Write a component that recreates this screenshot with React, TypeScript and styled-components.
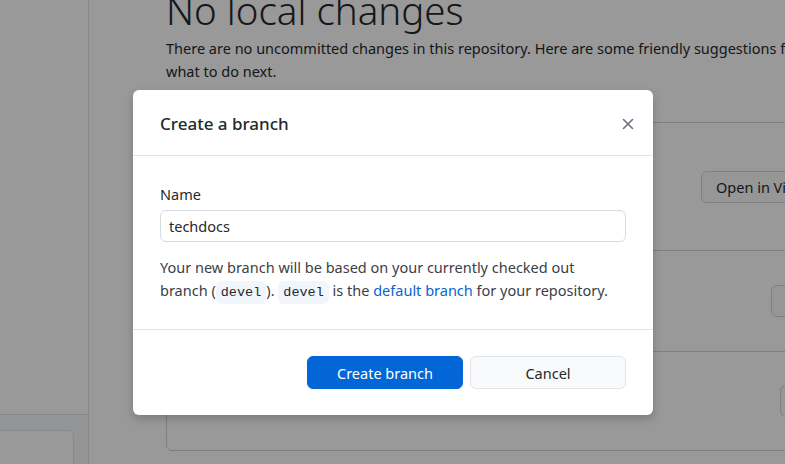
import React from "react";
import styled, { createGlobalStyle } from "styled-components";

const GlobalStyle = createGlobalStyle`
    html, body {
        margin: 0;
        padding: 0;
        width: 785px;
        height: 464px;
        overflow: hidden;
        background: #ffffff;
        font-family: "Noto Sans", "Open Sans", sans-serif;
        color: #24292e;
    }
`;

const Screen = styled.div`
    position: relative;
    display: flex;
    width: 785px;
    height: 464px;
    overflow: hidden;
    background: #ffffff;
`;

const Sidebar = styled.div`
    width: 88px;
    flex-shrink: 0;
    border-right: 1px solid #e1e4e8;
    display: flex;
    flex-direction: column;
    justify-content: flex-end;
`;

const SidebarFooter = styled.div`
    height: 34px;
    border-top: 1px solid #e1e4e8;
    background: #f6f8fa;
    padding: 15px 14px 0 0;
`;

const SidebarBox = styled.div`
    height: 100%;
    background: #ffffff;
    border: 1px solid #e1e4e8;
    border-left: none;
    border-radius: 0 6px 0 0;
`;

const Main = styled.div`
    flex: 1;
    padding: 0 0 0 77px;
    min-width: 0;
`;

const Heading = styled.h1`
    margin: -17px 0 0;
    font-size: 38.5px;
    font-weight: 300;
    line-height: 54px;
    white-space: nowrap;
`;

const Intro = styled.p`
    margin: 0;
    font-size: 14.5px;
    line-height: 23px;
    width: 640px;
`;

const Card = styled.div`
    margin-top: 39px;
    width: 768px;
    border: 1px solid #d1d5da;
    border-radius: 6px;
`;

const CardRow = styled.div<{ $height: number }>`
    height: ${({ $height }) => $height}px;
    display: flex;
    align-items: center;
    justify-content: space-between;
    padding: 0 20px;
    border-top: 1px solid #d1d5da;
    &:first-child {
        border-top: none;
    }
`;

const RowText = styled.div`
    font-size: 14px;
    line-height: 20px;
`;

const RowButton = styled.div`
    height: 30px;
    padding: 0 14px;
    display: flex;
    align-items: center;
    border: 1px solid #d1d5da;
    border-radius: 6px;
    background: #fafbfc;
    font-size: 14.5px;
    white-space: nowrap;
`;

const Key = styled.span`
    display: inline-block;
    margin-left: 3px;
    padding: 0 8px;
    border: 1px solid #d1d5da;
    border-radius: 6px;
    font-size: 12px;
    line-height: 20px;
`;

const Backdrop = styled.div`
    position: absolute;
    inset: 0;
    background: rgba(0, 0, 0, 0.4);
`;

const Dialog = styled.div`
    position: absolute;
    left: 133px;
    top: 90px;
    width: 520px;
    background: #ffffff;
    border-radius: 6px;
    box-shadow: 0 4px 10px rgba(0, 0, 0, 0.2);
`;

const DialogHeader = styled.div`
    height: 63px;
    display: flex;
    align-items: center;
    justify-content: space-between;
    padding: 2px 17px 0 27px;
    border-bottom: 1px solid #e1e4e8;
`;

const DialogTitle = styled.h2`
    margin: 0;
    font-size: 17px;
    font-weight: 500;
    color: #24292e;
`;

const CloseButton = styled.button`
    border: none;
    background: none;
    padding: 0;
    width: 16px;
    height: 16px;
    display: flex;
    color: #6a737d;
    cursor: pointer;
`;

const DialogBody = styled.div`
    padding: 28px 27px 25px;
    border-bottom: 1px solid #e1e4e8;
`;

const Label = styled.label`
    display: block;
    font-size: 14.5px;
    line-height: 20px;
    margin-bottom: 6px;
    color: #24292e;
`;

const Input = styled.input`
    box-sizing: border-box;
    width: 466px;
    height: 32px;
    padding: 0 8px;
    border: 1px solid #d6dbe0;
    border-radius: 6px;
    font-family: inherit;
    font-size: 14.5px;
    color: #24292e;
    outline: none;
`;

const Description = styled.p`
    margin: 14px 0 0;
    max-width: 455px;
    font-size: 14.5px;
    line-height: 23px;
    color: #3b4046;
`;

const Code = styled.code`
    display: inline-block;
    font-family: "Liberation Mono", "DejaVu Sans Mono", monospace;
    font-size: 13.5px;
    line-height: 23px;
    background: #f1f6fc;
    border-radius: 6px;
    padding: 0 5px;
    color: #24292e;
`;

const Link = styled.a`
    color: #0366d6;
    text-decoration: none;
`;

const DialogFooter = styled.div`
    display: flex;
    justify-content: flex-end;
    gap: 7px;
    padding: 26px 27px 26px;
`;

const Button = styled.button<{ $primary?: boolean }>`
    width: 156px;
    height: 33px;
    border-radius: 6px;
    font-family: inherit;
    font-size: 14.5px;
    cursor: pointer;
    border: 1px solid ${({ $primary }) => ($primary ? "#0366d6" : "#e1e4e8")};
    background: ${({ $primary }) => ($primary ? "#0366d6" : "#f9fafb")};
    color: ${({ $primary }) => ($primary ? "#ffffff" : "#24292e")};
`;

const CloseIcon = () => (
    <svg width="16" height="16" viewBox="0 0 16 16" fill="none">
        <path d="M3.5 3.5l9 9M12.5 3.5l-9 9" stroke="currentColor" strokeWidth="1.6" strokeLinecap="round" />
    </svg>
);

export default function App() {
    return (
        <Screen>
            <GlobalStyle />
            <Sidebar>
                <SidebarFooter>
                    <SidebarBox />
                </SidebarFooter>
            </Sidebar>
            <Main>
                <Heading>No local changes</Heading>
                <Intro>
                    There are no uncommitted changes in this repository. Here are some friendly suggestions for
                    what to do next.
                </Intro>
                <Card>
                    <CardRow $height={127}>
                        <RowText>Open the repository in your external editor</RowText>
                        <RowButton>Open in Visual Studio Code</RowButton>
                    </CardRow>
                    <CardRow $height={100}>
                        <RowText>View the files of your repository in Explorer</RowText>
                        <RowButton>Show in Explorer</RowButton>
                    </CardRow>
                    <CardRow $height={98}>
                        <RowText>
                            Repository menu or
                            <Key>Ctrl</Key>
                            <Key>Shift</Key>
                            <Key>F</Key>
                        </RowText>
                        <RowButton>View on GitHub</RowButton>
                    </CardRow>
                </Card>
            </Main>
            <Backdrop />
            <Dialog>
                <DialogHeader>
                    <DialogTitle>Create a branch</DialogTitle>
                    <CloseButton aria-label="Close">
                        <CloseIcon />
                    </CloseButton>
                </DialogHeader>
                <DialogBody>
                    <Label>Name</Label>
                    <Input defaultValue="techdocs" />
                    <Description>
                        Your new branch will be based on your currently checked out branch (<Code>devel</Code>).{" "}
                        <Code>devel</Code> is the <Link>default branch</Link> for your repository.
                    </Description>
                </DialogBody>
                <DialogFooter>
                    <Button $primary>Create branch</Button>
                    <Button>Cancel</Button>
                </DialogFooter>
            </Dialog>
        </Screen>
    );
}
